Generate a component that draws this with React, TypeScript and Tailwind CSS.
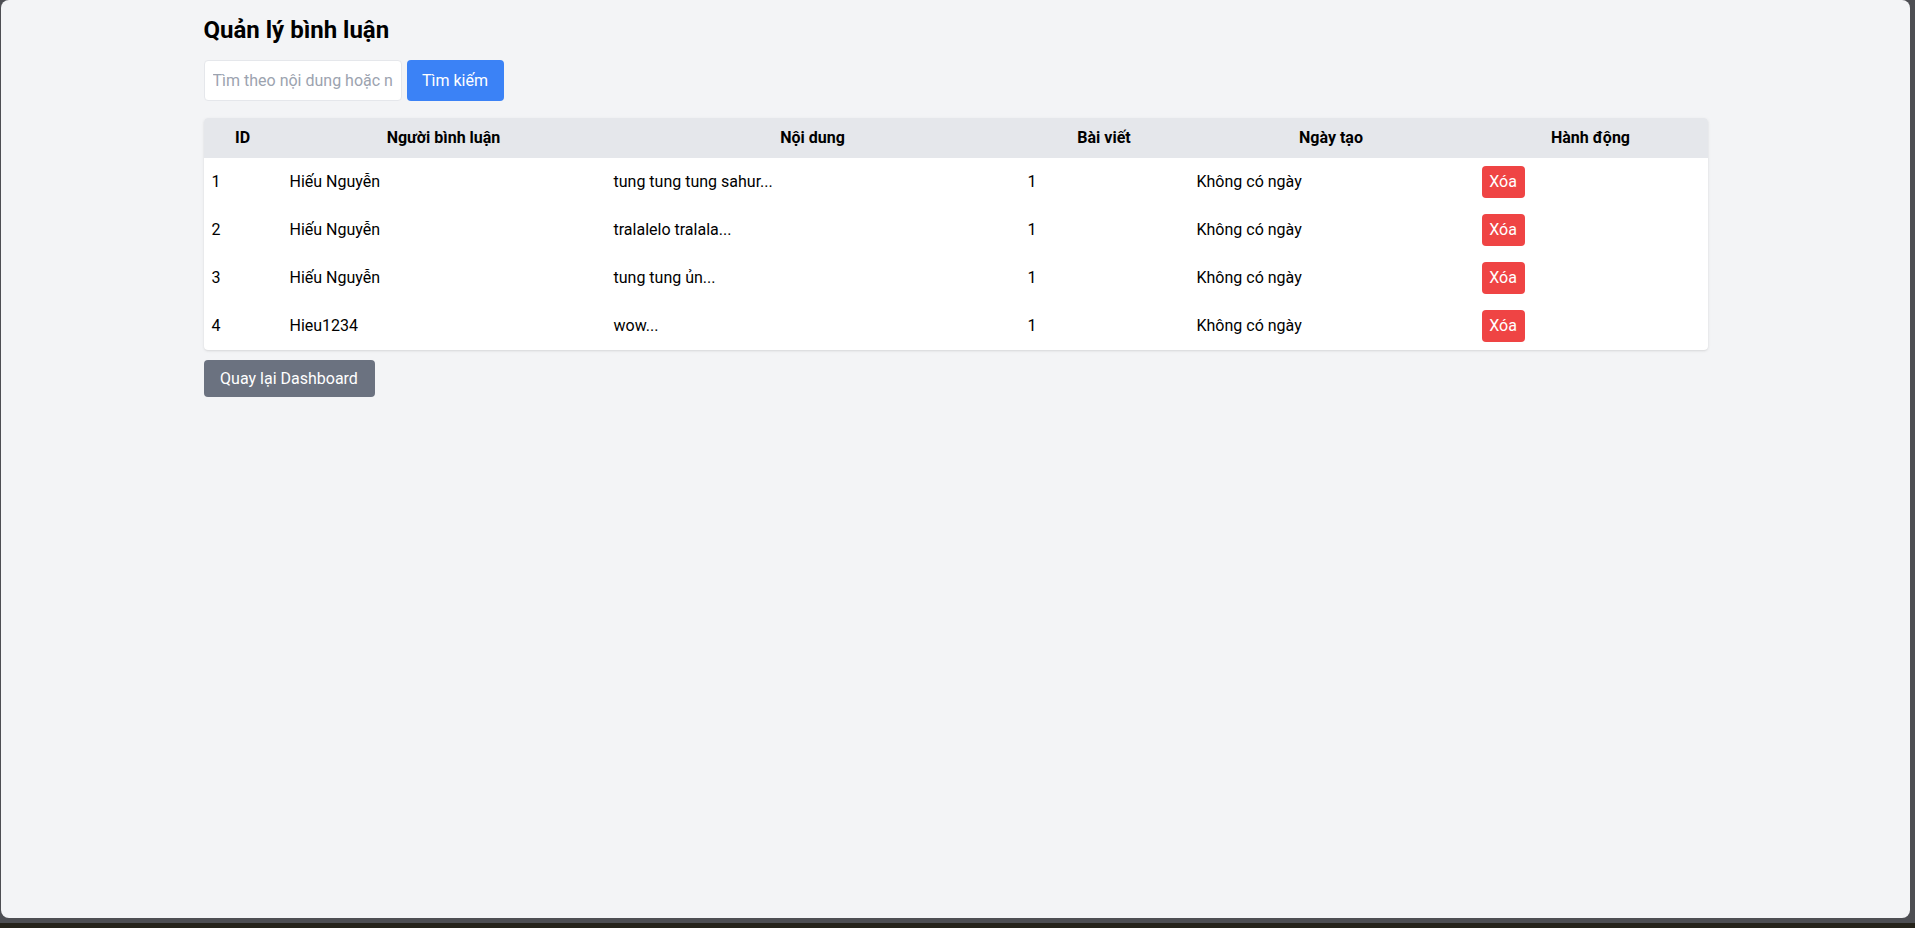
import React from "react";

const comments = [
  { id: 1, user: "Hiếu Nguyễn", content: "tung tung tung sahur...", post: 1, date: "Không có ngày" },
  { id: 2, user: "Hiếu Nguyễn", content: "tralalelo tralala...", post: 1, date: "Không có ngày" },
  { id: 3, user: "Hiếu Nguyễn", content: "tung tung ủn...", post: 1, date: "Không có ngày" },
  { id: 4, user: "Hieu1234", content: "wow...", post: 1, date: "Không có ngày" },
];

const App: React.FC = () => {
  return (
    <div className="h-screen w-full bg-[#25231b] font-['Roboto',sans-serif] text-black">
      <div className="h-[923px] bg-[#4d4e53] pl-px pr-[5px] pb-[5px]">
        <div className="h-full rounded-lg bg-[#f3f4f6]">
          <div className="mx-auto max-w-[1536px] px-4 pt-[14px]">
            <h1 className="text-2xl font-bold mb-[14px]">Quản lý bình luận</h1>

            {/* search */}
            <div className="flex gap-[5px] mb-[17px]">
              <input
                type="text"
                placeholder="Tìm theo nội dung hoặc người bình luận"
                className="w-[198px] h-[41px] px-2 bg-white border border-[#e5e7eb] rounded text-base placeholder:text-[#9ca3af] outline-none"
              />
              <button className="w-[97px] h-[41px] bg-[#3b82f6] text-white rounded">Tìm kiếm</button>
            </div>

            <div className="bg-white rounded shadow overflow-hidden">
              <table className="w-full table-fixed">
                <colgroup>
                  <col className="w-[78px]" />
                  <col className="w-[324px]" />
                  <col className="w-[414px]" />
                  <col className="w-[169px]" />
                  <col className="w-[285px]" />
                  <col />
                </colgroup>
                <thead className="bg-[#e5e7eb]">
                  <tr className="h-10">
                    <th className="px-2 font-bold">ID</th>
                    <th className="px-2 font-bold">Người bình luận</th>
                    <th className="px-2 font-bold">Nội dung</th>
                    <th className="px-2 font-bold">Bài viết</th>
                    <th className="px-2 font-bold">Ngày tạo</th>
                    <th className="px-2 font-bold">Hành động</th>
                  </tr>
                </thead>
                <tbody>
                  {comments.map((c) => (
                    <tr key={c.id} className="h-12">
                      <td className="p-2">{c.id}</td>
                      <td className="p-2">{c.user}</td>
                      <td className="p-2">{c.content}</td>
                      <td className="p-2">{c.post}</td>
                      <td className="p-2">{c.date}</td>
                      <td className="p-2">
                        <button className="w-[43px] h-8 bg-[#ef4444] text-white rounded">Xóa</button>
                      </td>
                    </tr>
                  ))}
                </tbody>
              </table>
            </div>

            <button className="mt-[10px] w-[171px] h-[37px] bg-[#6b7280] text-white rounded">
              Quay lại Dashboard
            </button>
          </div>
        </div>
      </div>
    </div>
  );
};

export default App;
